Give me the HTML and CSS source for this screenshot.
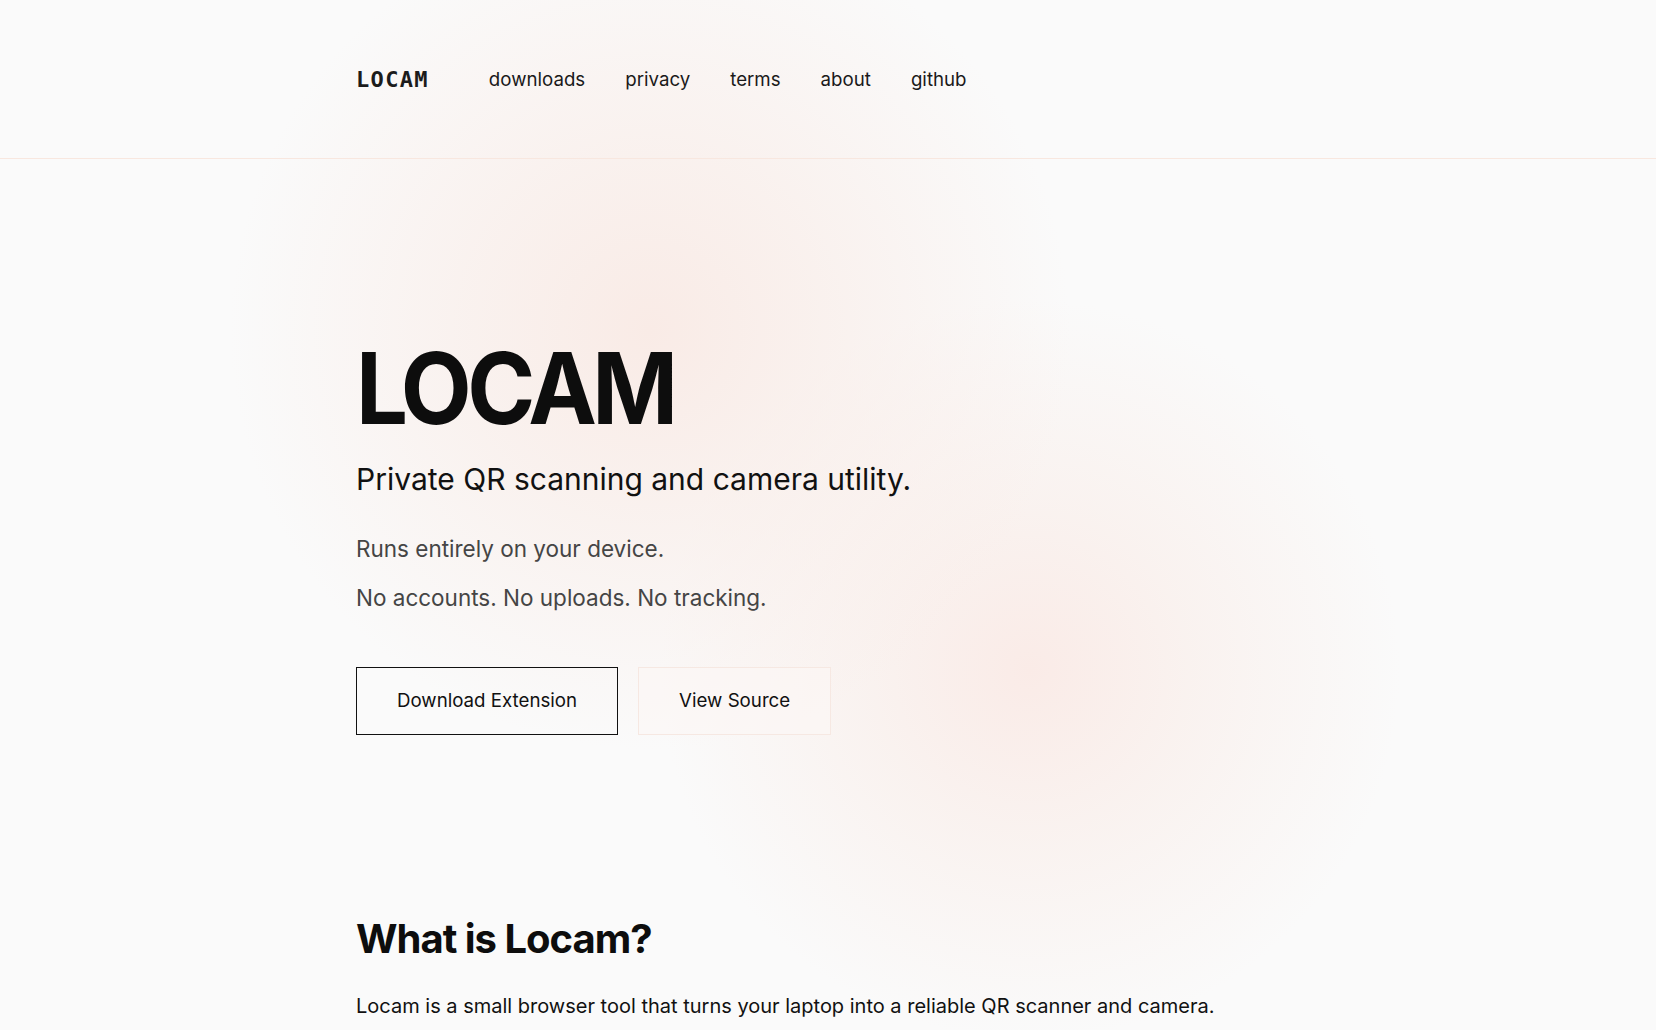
FILE: index.html
```html
<!DOCTYPE html>
<html lang="en">
<head>
<meta charset="utf-8">
<title>Locam</title>
<link rel="stylesheet" href="styles.css">
</head>
<body>
<header class="site-header">
  <div class="container header-inner">
    <a class="logo" href="#">LOCAM</a>
    <nav class="nav">
      <a href="#">downloads</a>
      <a href="#">privacy</a>
      <a href="#">terms</a>
      <a href="#">about</a>
      <a href="#">github</a>
    </nav>
  </div>
</header>
<main class="container">
  <section class="hero">
    <h1 class="hero-title">LOCAM</h1>
    <p class="hero-sub">Private QR scanning and camera utility.</p>
    <p class="hero-note">Runs entirely on your device.</p>
    <p class="hero-note">No accounts. No uploads. No tracking.</p>
    <div class="actions">
      <a class="btn btn-primary" href="#">Download Extension</a>
      <a class="btn btn-ghost" href="#">View Source</a>
    </div>
  </section>
  <section class="about">
    <h2 class="section-title">What is Locam?</h2>
    <p class="section-text">Locam is a small browser tool that turns your laptop into a reliable QR scanner and camera.</p>
  </section>
</main>
</body>
</html>
```

FILE: styles.css
```css
* { box-sizing: border-box; }

html, body { margin: 0; padding: 0; }

body {
  font-family: Inter, "Noto Sans", "Liberation Sans", sans-serif;
  color: #111111;
  background-color: #fafafa;
  background-image:
    radial-gradient(circle 420px at 650px 330px, #f9ebe6 0%, rgba(249, 236, 231, 0.6) 45%, rgba(250, 250, 250, 0) 100%),
    radial-gradient(circle 370px at 1030px 670px, #faebe7 0%, rgba(249, 236, 231, 0.55) 45%, rgba(250, 250, 250, 0) 100%);
  background-repeat: no-repeat;
  min-height: 100vh;
}

a { color: inherit; text-decoration: none; }

.container {
  width: 944px;
  margin: 0 auto;
}

.site-header {
  border-bottom: 1px solid #f8e7df;
}

.header-inner {
  height: 158px;
  display: flex;
  align-items: center;
  gap: 60px;
}

.logo {
  font-family: "DejaVu Sans Mono", "Liberation Mono", monospace;
  font-weight: 700;
  font-size: 22px;
  letter-spacing: 0.06em;
  color: #1c1c1c;
}

.nav {
  display: flex;
  gap: 40px;
  font-size: 18.7px;
  color: #1a1a1a;
}

.hero {
  padding-top: 180px;
}

.hero-title {
  margin: 0 0 22px;
  font-size: 99px;
  line-height: 1;
  font-weight: 700;
  letter-spacing: -0.05em;
  color: #0d0d0d;
  transform: scaleX(0.93);
  transform-origin: left center;
}

.hero-sub {
  margin: 0 0 33px;
  font-size: 30px;
  line-height: 1.3;
  color: #111111;
}

.hero-note {
  margin: 0 0 14px;
  font-size: 22.5px;
  line-height: 1.55;
  color: #454545;
}

.actions {
  display: flex;
  gap: 20px;
  margin-top: 51px;
}

.btn {
  display: inline-block;
  padding: 20px 40px;
  font-size: 18.7px;
  line-height: 1.4;
  border: 1px solid transparent;
  color: #111111;
}

.btn-primary {
  border-color: #111111;
}

.btn-ghost {
  border-color: #f6e8e2;
  background: rgba(252, 247, 245, 0.6);
}

.about {
  padding-top: 180px;
}

.section-title {
  margin: 0 0 27px;
  font-size: 40px;
  line-height: 1.2;
  font-weight: 700;
  letter-spacing: -0.025em;
  color: #0d0d0d;
}

.section-text {
  margin: 0;
  font-size: 20px;
  line-height: 1.6;
  color: #111111;
}
```
